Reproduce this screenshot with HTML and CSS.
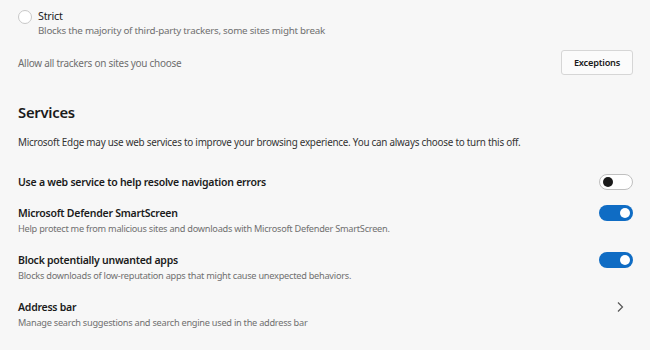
FILE: index.html
```html
<!DOCTYPE html>
<html>
<head>
<meta charset="utf-8">
<link rel="stylesheet" href="styles.css">
</head>
<body>
<div class="page">
  <div class="radio-option">
    <span class="radio"></span>
    <div class="radio-text">
      <div class="radio-label">Strict</div>
      <div class="radio-desc">Blocks the majority of third-party trackers, some sites might break</div>
    </div>
  </div>
  <div class="exceptions-row">
    <span class="muted">Allow all trackers on sites you choose</span>
    <button class="btn">Exceptions</button>
  </div>
  <h2 class="section-title">Services</h2>
  <p class="intro">Microsoft Edge may use web services to improve your browsing experience. You can always choose to turn this off.</p>
  <div class="setting first">
    <div class="setting-text">
      <div class="setting-title">Use a web service to help resolve navigation errors</div>
    </div>
    <span class="toggle off"><span class="knob"></span></span>
  </div>
  <div class="setting">
    <div class="setting-text">
      <div class="setting-title">Microsoft Defender SmartScreen</div>
      <div class="desc">Help protect me from malicious sites and downloads with Microsoft Defender SmartScreen.</div>
    </div>
    <span class="toggle on"><span class="knob"></span></span>
  </div>
  <div class="setting">
    <div class="setting-text">
      <div class="setting-title">Block potentially unwanted apps</div>
      <div class="desc">Blocks downloads of low-reputation apps that might cause unexpected behaviors.</div>
    </div>
    <span class="toggle on"><span class="knob"></span></span>
  </div>
  <div class="setting">
    <div class="setting-text">
      <div class="setting-title">Address bar</div>
      <div class="desc">Manage search suggestions and search engine used in the address bar</div>
    </div>
    <svg class="chevron" width="8" height="12" viewBox="0 0 8 12"><path d="M2 1.5 L6.5 6 L2 10.5" fill="none" stroke="#555" stroke-width="1.2"/></svg>
  </div>
</div>
</body>
</html>
```

FILE: styles.css
```css
html, body {
  margin: 0;
  padding: 0;
  background: #f7f7f7;
}
body {
  font-family: "Noto Sans", "Open Sans", sans-serif;
  color: #1b1b1b;
  width: 650px;
  height: 350px;
  overflow: hidden;
  letter-spacing: -0.25px;
}
.page {
  padding: 8px 17px 0 18px;
}
.radio-option {
  display: flex;
  align-items: flex-start;
  gap: 6px;
}
.radio {
  width: 12px;
  height: 12px;
  border: 1px solid #c8c8c8;
  border-radius: 50%;
  background: #fff;
  margin-top: 2px;
  flex: none;
}
.radio-label {
  font-size: 10.8px;
  line-height: 16px;
  color: #1b1b1b;
}
.radio-desc {
  font-size: 9.8px;
  line-height: 14px;
  color: #707070;
}
.exceptions-row {
  display: flex;
  justify-content: space-between;
  align-items: center;
  margin-top: 12px;
}
.muted {
  font-size: 9.95px;
  color: #6e6e6e;
}
.btn {
  font-family: inherit;
  font-size: 9.2px;
  letter-spacing: -0.2px;
  font-weight: 600;
  color: #1b1b1b;
  background: #fbfbfb;
  border: 1px solid #d6d6d6;
  border-radius: 3px;
  width: 72px;
  height: 25px;
  padding: 0;
}
.section-title {
  font-size: 14.8px;
  font-weight: 600;
  margin: 26px 0 0 0;
  line-height: 22px;
  color: #1b1b1b;
}
.intro {
  font-size: 9.9px;
  line-height: 14px;
  color: #333;
  margin: 12px 0 0 0;
}
.setting {
  display: flex;
  align-items: flex-start;
  justify-content: space-between;
  margin-top: 15px;
}
.setting.first {
  margin-top: 25px;
}
.setting-title {
  font-size: 10.5px;
  font-weight: 600;
  line-height: 16px;
  color: #1b1b1b;
}
.desc {
  font-size: 9.2px;
  line-height: 16px;
  color: #707070;
}
.toggle {
  position: relative;
  width: 34px;
  height: 16px;
  border-radius: 9px;
  box-sizing: border-box;
  flex: none;
}
.toggle.off {
  background: #fff;
  border: 1px solid #c0c0c0;
}
.toggle.on {
  background: #0f6cc4;
}
.knob {
  position: absolute;
  top: 50%;
  width: 10px;
  height: 10px;
  margin-top: -5px;
  border-radius: 50%;
}
.toggle.off .knob {
  left: 3px;
  background: #1b1b1b;
}
.toggle.on .knob {
  right: 3px;
  background: #fff;
}
.chevron {
  margin: 2px 9px 0 0;
}
```
